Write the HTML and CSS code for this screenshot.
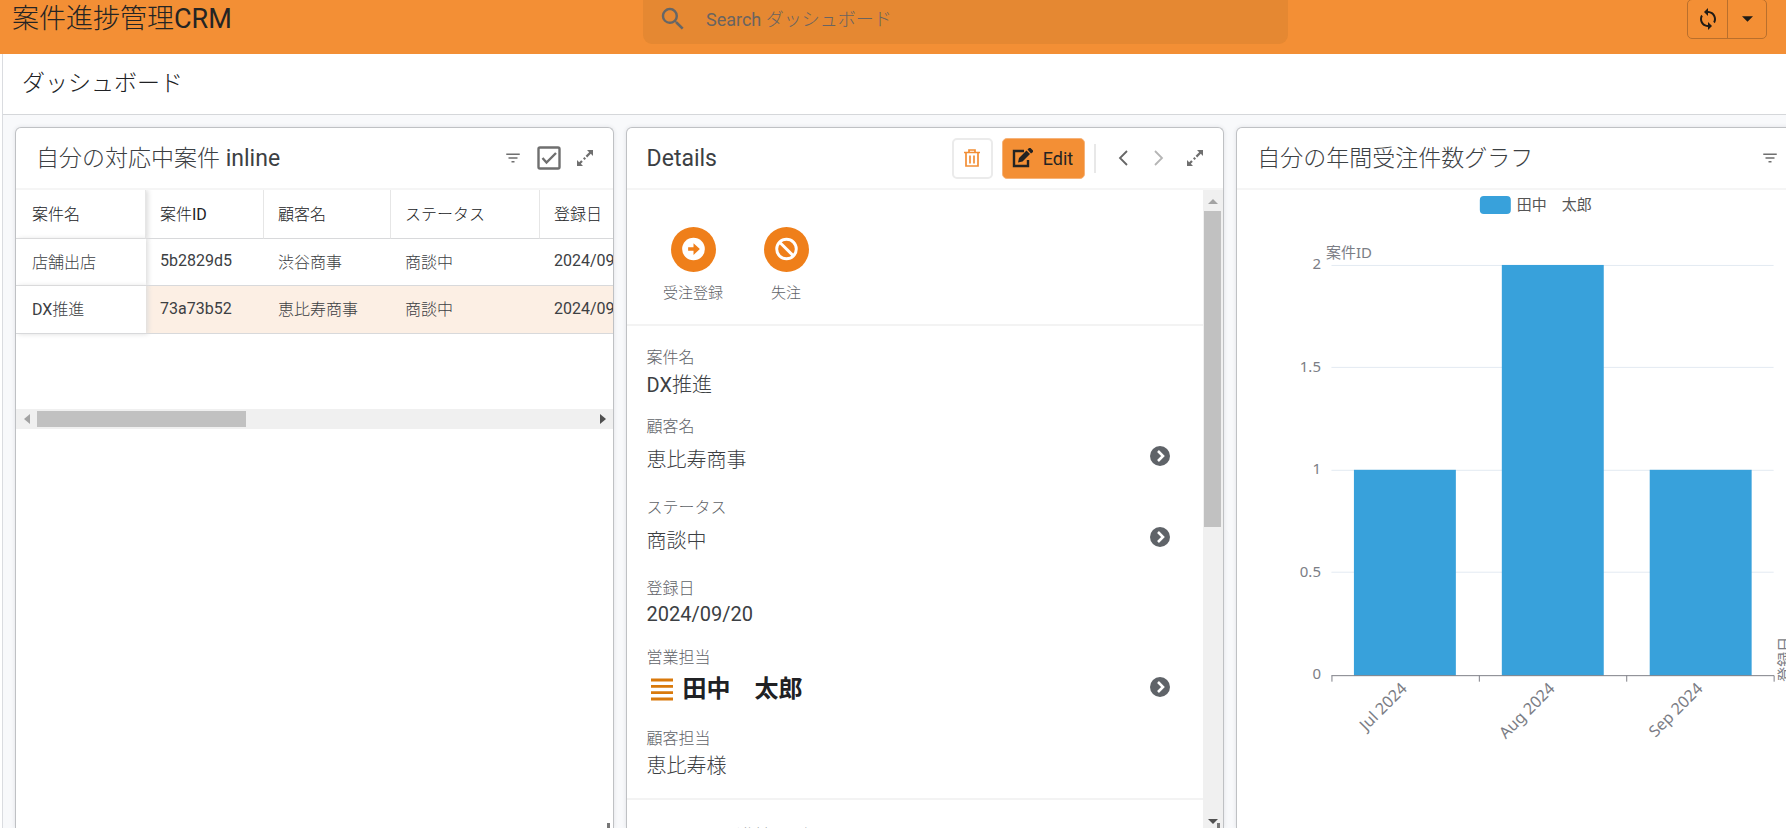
FILE: index.html
```html
<!DOCTYPE html>
<html lang="ja">
<head>
<meta charset="utf-8">
<title>案件進捗管理CRM</title>
<link rel="stylesheet" href="styles.css">
</head>
<body>
<svg class="sprite" aria-hidden="true">
  <symbol id="filter" viewBox="0 0 24 24"><path d="M10 18h4v-2h-4v2zM3 6v2h18V6H3zm3 7h12v-2H6v2z"/></symbol>
  <symbol id="expand" viewBox="0 0 18 18"><path d="M11 1h6v6l-2.200-2.200-3.600 3.600-1.600-1.600 3.600-3.600zM1 17v-6l2.200 2.200 2-2 1.600 1.600-2 2L7 17zM7 9.400l1.600 1.600 1.400-1.400L8.400 8z"/></symbol>
  <symbol id="go" viewBox="0 0 20 20"><circle cx="10" cy="10" r="10"/><path d="M8 5l5 5-5 5" fill="none" stroke="#fff" stroke-width="2.600"/></symbol>
</svg>

<header class="topbar">
  <h1 class="app-title">案件進捗管理CRM</h1>
  <form class="search">
    <svg class="search-icon" viewBox="0 0 24 24"><path d="M15.500 14h-.790l-.280-.270A6.470 6.470 0 0 0 16 9.500 6.500 6.500 0 1 0 9.500 16c1.610 0 3.090-.590 4.230-1.570l.270.280v.790l5 4.990L20.490 19l-4.990-5zm-6 0C7.010 14 5 11.990 5 9.500S7.010 5 9.500 5 14 7.010 14 9.500 11.990 14 9.500 14z"/></svg>
    <input class="search-input" type="text" aria-label="Search ダッシュボード" placeholder="Search ダッシュボード">
  </form>
  <div class="sync">
    <button class="sync-button" aria-label="Sync">
      <svg viewBox="0 0 24 24" class="sync-icon"><path d="M12 4V1L8 5l4 4V6c3.310 0 6 2.690 6 6 0 1.010-.250 1.970-.700 2.800l1.460 1.460C19.540 15.030 20 13.570 20 12c0-4.420-3.580-8-8-8zm0 14c-3.310 0-6-2.690-6-6 0-1.010.250-1.970.700-2.800L5.240 7.740C4.460 8.970 4 10.430 4 12c0 4.420 3.580 8 8 8v3l4-4-4-4v3z"/></svg>
    </button>
    <button class="sync-button" aria-label="Sync options">
      <svg viewBox="0 0 12 6" class="caret"><path d="M0 0h12L6 6z"/></svg>
    </button>
  </div>
</header>

<main class="page">
  <h2 class="page-title">ダッシュボード</h2>
  <div class="board">

    <section class="card">
      <div class="card-head">
        <h3 class="card-title">自分の対応中案件 inline</h3>
        <button class="tool" aria-label="Filter"><svg class="icon-filter"><use href="#filter"/></svg></button>
        <button class="tool tool-check" aria-label="Select"><svg viewBox="0 0 24 24"><rect x="1.500" y="1.500" width="21" height="21" rx="1.500" fill="none" stroke="#6f6f6f" stroke-width="2.400"/><path d="M5.500 12l4 4.500L19 7" fill="none" stroke="#6f6f6f" stroke-width="2.400"/></svg></button>
        <button class="tool" aria-label="Expand"><svg class="icon-expand"><use href="#expand"/></svg></button>
      </div>
      <div class="table-wrap">
        <table class="cases">
          <colgroup><col class="c-name"><col class="c-id"><col class="c-client"><col class="c-status"><col class="c-date"></colgroup>
          <thead>
            <tr><th>案件名</th><th>案件ID</th><th>顧客名</th><th>ステータス</th><th>登録日</th></tr>
          </thead>
          <tbody>
            <tr><td>店舗出店</td><td>5b2829d5</td><td>渋谷商事</td><td>商談中</td><td>2024/09/20</td></tr>
            <tr class="selected"><td>DX推進</td><td>73a73b52</td><td>恵比寿商事</td><td>商談中</td><td>2024/09/20</td></tr>
          </tbody>
        </table>
      </div>
      <div class="hscroll">
        <svg class="arrow-h" viewBox="0 0 6 10"><path d="M6 0v10L0 5z" fill="#a3a3a3"/></svg>
        <div class="hthumb"></div>
        <svg class="arrow-h" viewBox="0 0 6 10"><path d="M0 0v10l6-5z" fill="#505050"/></svg>
      </div>
      <div class="grip"></div>
    </section>

    <section class="card">
      <div class="card-head">
        <h3 class="card-title">Details</h3>
        <button class="btn-delete" aria-label="Delete"><svg viewBox="0 0 16 18"><path d="M0 3.500h16M5 3V1h6v2M2 4v13h12V4M6 6.500v8M10 6.500v8" fill="none" stroke="#f28e35" stroke-width="1.700"/></svg></button>
        <button class="btn-edit"><svg viewBox="0 0 22 20"><path d="M12 3H2v15h14v-6" fill="none" stroke="#232323" stroke-width="2.400"/><path d="M6 14.500l1-4.500 7.500-7.500 3.500 3.500-7.500 7.500zM15.500 1.500L17 0h1.500L21 2.500V4l-2 1.500z" fill="#232323"/></svg>Edit</button>
        <span class="rule"></span>
        <button class="tool" aria-label="Previous"><svg class="chev" viewBox="0 0 10 16"><path d="M9 1L2 8l7 7" fill="none" stroke="#666" stroke-width="1.800"/></svg></button>
        <button class="tool" aria-label="Next"><svg class="chev" viewBox="0 0 10 16"><path d="M1 1l7 7-7 7" fill="none" stroke="#b5b5b5" stroke-width="1.800"/></svg></button>
        <button class="tool" aria-label="Expand"><svg class="icon-expand"><use href="#expand"/></svg></button>
      </div>
      <div class="detail-body">
        <div class="detail">
          <div class="actions">
            <button class="action">
              <svg viewBox="0 0 46 46"><circle cx="23" cy="23" r="23" fill="#ef7f1a"/><circle cx="23" cy="22.500" r="11.600" fill="#fff"/><path d="M17.500 20.800h5.500v-4.300l6.500 6-6.500 6v-4.300h-5.500z" fill="#ef7f1a"/></svg>
              <span>受注登録</span>
            </button>
            <button class="action">
              <svg viewBox="0 0 46 46"><circle cx="23" cy="23" r="23" fill="#ef7f1a"/><circle cx="23" cy="22.500" r="10" fill="none" stroke="#fff" stroke-width="3"/><path d="M16 15.500l14 14" stroke="#fff" stroke-width="3"/></svg>
              <span>失注</span>
            </button>
          </div>
          <dl class="fields">
            <div class="field"><dt>案件名</dt><dd>DX推進</dd></div>
            <div class="field linked"><dt>顧客名</dt><dd>恵比寿商事<a class="go" href="#" aria-label="顧客名"><svg><use href="#go"/></svg></a></dd></div>
            <div class="field linked"><dt>ステータス</dt><dd>商談中<a class="go" href="#" aria-label="ステータス"><svg><use href="#go"/></svg></a></dd></div>
            <div class="field"><dt>登録日</dt><dd>2024/09/20</dd></div>
            <div class="field linked"><dt>営業担当</dt><dd class="owner"><svg class="avatar" viewBox="0 0 22 23"><path d="M0 2h22M0 8.300h22M0 14.600h22M0 21h22" stroke="#d9790b" stroke-width="2.800"/></svg>田中　太郎<a class="go" href="#" aria-label="営業担当"><svg><use href="#go"/></svg></a></dd></div>
            <div class="field"><dt>顧客担当</dt><dd>恵比寿様</dd></div>
          </dl>
          <h4 class="next-title">ステータス進捗ログ</h4>
        </div>
        <div class="vscroll">
          <svg class="arrow-v" viewBox="0 0 10 5"><path d="M0 5h10L5 0z" fill="#a3a3a3"/></svg>
          <div class="vtrack"><div class="vthumb"></div></div>
          <svg class="arrow-v" viewBox="0 0 10 5"><path d="M0 0h10L5 5z" fill="#505050"/></svg>
        </div>
      </div>
      <div class="grip"></div>
    </section>

    <section class="card">
      <div class="card-head">
        <h3 class="card-title">自分の年間受注件数グラフ</h3>
        <button class="tool" aria-label="Filter"><svg class="icon-filter"><use href="#filter"/></svg></button>
        <span class="tool"></span>
      </div>
      <svg class="chart" viewBox="0 0 597 560" role="img" aria-label="自分の年間受注件数グラフ">
        <rect x="243" y="6" width="31" height="18" rx="4" fill="#38a1db"/>
        <text x="280" y="20" class="legend">田中　太郎</text>
        <text x="89" y="68">案件ID</text>
        <path class="grid" d="M94.500 75.500H537M94.500 177.500H537M94.500 280.500H537M94.500 382.500H537"/>
        <g fill="#38a1db">
          <rect x="117" y="280" width="102" height="206"/>
          <rect x="265" y="75" width="102" height="411"/>
          <rect x="413" y="280" width="102" height="206"/>
        </g>
        <path class="axis" d="M94.500 486H537.500M95 486v6M242.500 486v6M390 486v6M537.500 486v6"/>
        <g text-anchor="end">
          <text x="84" y="79">2</text>
          <text x="84" y="182">1.5</text>
          <text x="84" y="284">1</text>
          <text x="84" y="387">0.5</text>
          <text x="84" y="489">0</text>
          <text class="month" transform="translate(171 500) rotate(-45)">Jul 2024</text>
          <text class="month" transform="translate(319 500) rotate(-45)">Aug 2024</text>
          <text class="month" transform="translate(467 500) rotate(-45)">Sep 2024</text>
        </g>
        <text transform="translate(553 492) rotate(-90)">登録日</text>
      </svg>
    </section>

  </div>
</main>
</body>
</html>
```

FILE: styles.css
```css
* { box-sizing: border-box; }

body {
  margin: 0;
  height: 100vh;
  display: flex;
  flex-direction: column;
  overflow: hidden;
  background: #fff;
  color: #3c4043;
  font-family: Roboto, "Noto Sans CJK JP Light", "Noto Sans CJK JP", sans-serif;
  font-weight: 400;
  font-size: 16px;
}

h1, h2, h3, h4, dl, dd { margin: 0; font-weight: 400; }

button {
  border: 0;
  padding: 0;
  background: none;
  color: inherit;
  font: inherit;
}

svg { display: block; fill: #6f6f6f; }
.sprite { display: none; }

.topbar {
  display: grid;
  grid-template-columns: 36% 36.1% 1fr;
  align-items: start;
  height: 54px;
  flex: none;
  background: #f38f35;
}

.app-title {
  padding-left: 12px;
  font-size: 27px;
  line-height: 38px;
  color: #242424;
}

.search {
  display: flex;
  align-items: center;
  height: 44px;
  padding: 0 18px 6px 15px;
  border-radius: 0 0 9px 9px;
  background: #e58832;
}

.search-icon { width: 30px; height: 30px; fill: #666; }

.search-input {
  flex: 1;
  margin-left: 18px;
  padding: 0;
  border: 0;
  outline: 0;
  background: none;
  font: inherit;
  font-size: 18px;
}
.search-input::placeholder { color: #6a6460; opacity: 1; }

.sync {
  justify-self: end;
  display: flex;
  height: 40px;
  margin: -1px 19px 0 0;
  border: 1px solid #b96f2c;
  border-radius: 5px;
}
.sync-button {
  display: flex;
  align-items: center;
  justify-content: center;
  width: 39px;
}
.sync-button + .sync-button { border-left: 1px solid #b96f2c; }
.sync-icon { width: 24px; height: 24px; fill: #1f1b16; }
.caret { width: 11px; height: 6px; fill: #1f1b16; }

.page {
  flex: 1;
  min-height: 0;
  display: flex;
  flex-direction: column;
  margin-left: 2px;
  border-left: 1px solid #dadce0;
  background: #f8f9fb;
}

.page-title {
  height: 61px;
  flex: none;
  padding-left: 19px;
  border-bottom: 1px solid #d5d7da;
  background: #fff;
  font-size: 23px;
  line-height: 60px;
  color: #202124;
}

.board {
  flex: 1;
  min-height: 0;
  display: grid;
  grid-template-columns: repeat(3, 33.8%);
  grid-template-rows: 100%;
  gap: 12px;
  padding: 12px 0 0 12px;
  overflow: hidden;
}

.card {
  position: relative;
  display: flex;
  flex-direction: column;
  min-width: 0;
  border: 1px solid #bfc1c4;
  border-bottom: 0;
  border-radius: 6px 6px 0 0;
  background: #fff;
  box-shadow: 0 0 4px #dfe1e5;
  overflow: hidden;
}

.card-head {
  display: flex;
  align-items: center;
  flex: none;
  height: 62px;
  padding: 0 10px 0 20px;
  border-bottom: 2px solid #f5f5f5;
}

.card-title {
  flex: 1;
  padding-top: 2px;
  font-size: 23px;
  line-height: 32px;
  color: #3c4043;
}

.tool {
  display: flex;
  align-items: center;
  justify-content: center;
  width: 36px;
  height: 36px;
}
.icon-filter { width: 18px; height: 18px; }
.icon-expand { width: 18px; height: 18px; }
.tool-check svg { width: 24px; height: 24px; }
.chev { width: 10px; height: 16px; }

.btn-delete {
  display: flex;
  align-items: center;
  justify-content: center;
  width: 41px;
  height: 41px;
  margin-right: 9px;
  border: 2px solid #ebebeb;
  border-radius: 5px;
}
.btn-delete svg { width: 16px; height: 18px; }

.btn-edit {
  display: flex;
  align-items: center;
  gap: 9px;
  height: 41px;
  padding: 0 11px 0 9px;
  border: 1px solid #f6b37a;
  border-radius: 5px;
  background: #f38f35;
  font-size: 18px;
  color: #232323;
}
.btn-edit svg { width: 22px; height: 20px; }

.rule {
  width: 2px;
  height: 29px;
  margin: 0 9px;
  background: #e8e8e8;
}

.table-wrap {
  flex: none;
  height: 219px;
  overflow: hidden;
}
.cases {
  width: 680px;
  table-layout: fixed;
  border-collapse: separate;
  border-spacing: 0;
  text-align: left;
}
.c-name { width: 130px; }
.c-id { width: 118px; }
.c-client { width: 127px; }
.c-status { width: 149px; }

.cases th, .cases td {
  height: 47px;
  padding: 0 14px 3px;
  border-bottom: 1px solid #d8d9db;
  font-weight: 400;
  white-space: nowrap;
}
.cases th {
  height: 49px;
  border-right: 1px solid #e6e6e6;
  color: #202124;
}
.cases th:first-child, .cases td:first-child {
  position: relative;
  padding-left: 16px;
  background: #fff;
  box-shadow: 2px 0 5px #dcdcdc;
}
.cases .selected td { height: 48px; background: #fcefe4; }
.cases .selected td:first-child { background: #fff; }

.hscroll {
  display: flex;
  align-items: center;
  flex: none;
  height: 20px;
  padding: 0 7px 0 8px;
  background: #f0f0f0;
}
.hthumb { width: 36%; height: 16px; margin: 0 auto 0 7px; background: #c1c1c1; }
.arrow-h { width: 6px; height: 10px; }

.grip {
  position: absolute;
  right: 3px;
  bottom: 0;
  width: 3px;
  height: 5px;
  background: #777;
}

.detail-body {
  flex: 1;
  min-height: 0;
  display: flex;
}
.detail { flex: 1; overflow: hidden; }

.actions {
  display: flex;
  padding: 37px 20px 22px;
  border-bottom: 2px solid #f3f3f3;
}
.action {
  width: 93px;
  font-size: 15px;
  line-height: 18px;
  color: #5f6368;
}
.action svg { width: 45px; height: 45px; margin: 0 auto 12px; }

.fields {
  padding: 20px 33px 2px 20px;
  border-bottom: 2px solid #f3f3f3;
}
.field { padding-bottom: 19px; }
.field dt { line-height: 24px; color: #5f6368; }
.field dd {
  display: flex;
  align-items: center;
  height: 26px;
  font-size: 20px;
}
.field.linked dd { height: 38px; }
.field .owner { font-family: Roboto, "Noto Sans CJK JP", sans-serif; font-size: 24px; font-weight: 700; line-height: 32px; color: #202124; }
.avatar { width: 22px; height: 23px; margin: 0 10px 0 4px; }
.go { margin: 0 0 5px auto; }
.go svg { width: 20px; height: 20px; fill: #5f6368; }

.next-title {
  padding: 20px;
  font-size: 18px;
  line-height: 34px;
}

.vscroll {
  display: flex;
  flex-direction: column;
  align-items: center;
  width: 20px;
  padding: 9px 0 4px;
  background: #f0f0f0;
}
.vtrack { flex: 1; align-self: stretch; padding: 7px 2px 0 1px; }
.vthumb { height: 52%; background: #c1c1c1; }
.arrow-v { width: 10px; height: 5px; }

.chart { width: 100%; height: auto; flex: none; }
.chart text {
  font-family: "Noto Sans", "Noto Sans CJK JP", sans-serif;
  font-size: 15px;
  font-weight: 400;
  fill: #7b7d85;
}
.chart .month { font-size: 16px; }
.chart .legend { fill: #555; }
.chart .grid { stroke: #e3eaf2; stroke-width: 1; fill: none; }
.chart .axis { stroke: #7e8087; stroke-width: 1; fill: none; }
```
